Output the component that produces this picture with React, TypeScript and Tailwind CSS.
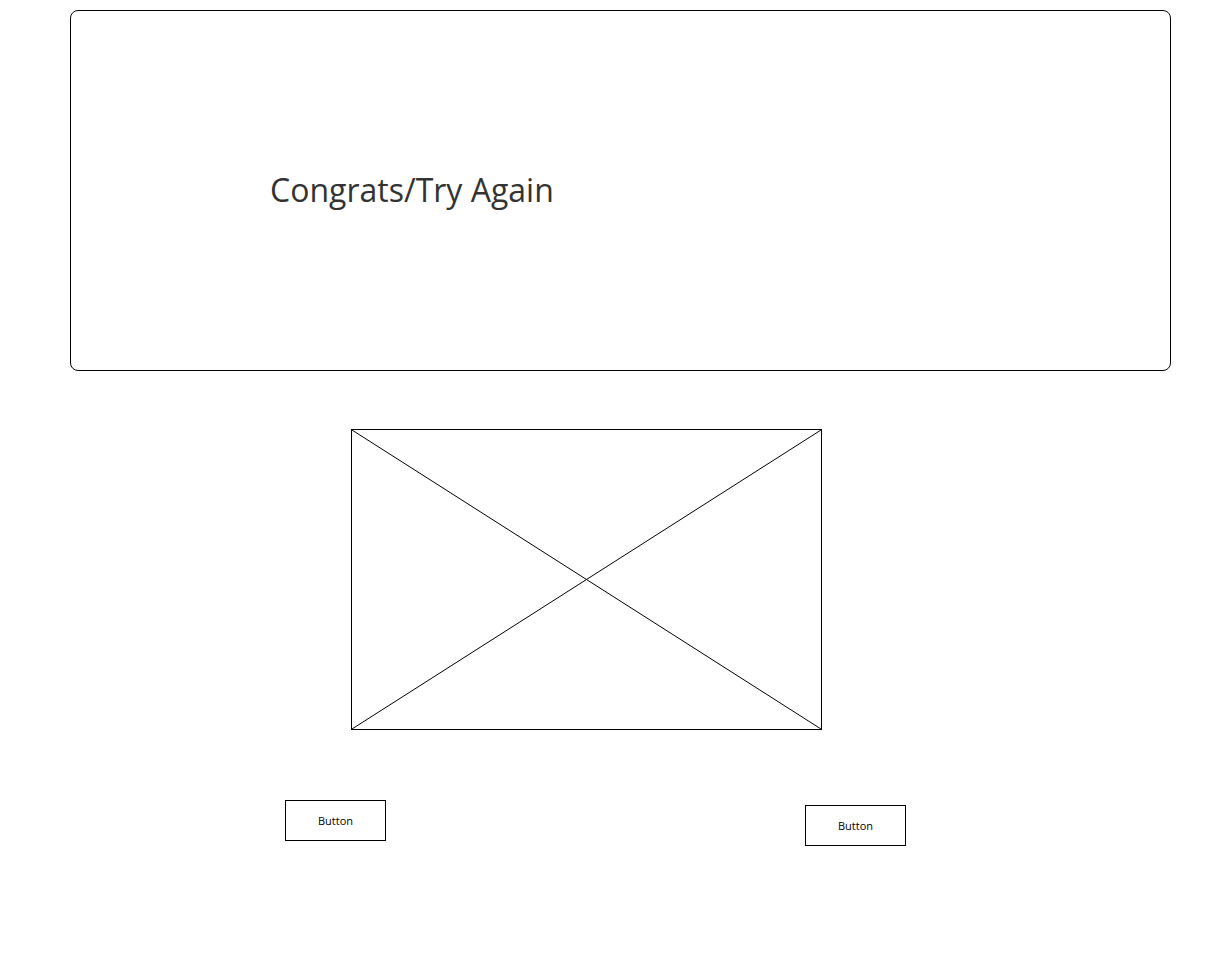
export default function App() {
  return (
    <div className="min-h-[955px] w-[1221px] bg-white pt-[10px] font-['Open_Sans',sans-serif]">
      {/* result banner */}
      <div className="ml-[70px] flex h-[361px] w-[1101px] items-center rounded-[8px] border border-[#000] pl-[199px]">
        <h1 className="pb-[1px] text-[32px] leading-none text-[#333333]">Congrats/Try Again</h1>
      </div>

      {/* image placeholder */}
      <div className="ml-[351px] mt-[58px] h-[301px] w-[471px] border border-black">
        <svg width="469" height="299" viewBox="0 0 469 299" className="block">
          <line x1="0" y1="0" x2="469" y2="299" stroke="black" strokeWidth="1" />
          <line x1="469" y1="0" x2="0" y2="299" stroke="black" strokeWidth="1" />
        </svg>
      </div>

      {/* actions */}
      <div className="mt-[70px] flex items-start">
        <button className="ml-[285px] flex h-[41px] w-[101px] items-center justify-center border border-black bg-white pt-[2px] text-[11px] text-black">
          Button
        </button>
        <button className="ml-[419px] mt-[5px] flex h-[41px] w-[101px] items-center justify-center border border-black bg-white pt-[2px] text-[11px] text-black">
          Button
        </button>
      </div>
    </div>
  )
}
